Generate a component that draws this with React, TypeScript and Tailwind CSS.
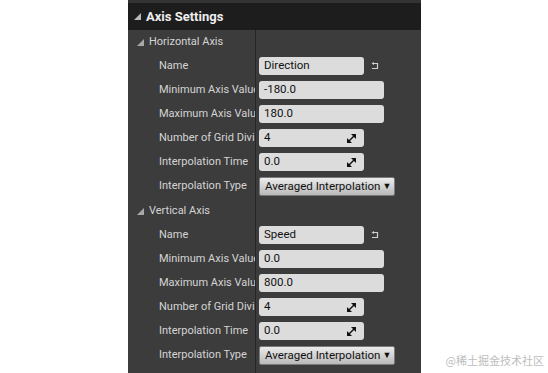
import React from "react";

type Field =
  | { label: string; kind: "name"; value: string }
  | { label: string; kind: "text"; value: string }
  | { label: string; kind: "spin"; value: string }
  | { label: string; kind: "select"; value: string };

const sections: { title: string; fields: Field[] }[] = [
  {
    title: "Horizontal Axis",
    fields: [
      { label: "Name", kind: "name", value: "Direction" },
      { label: "Minimum Axis Value", kind: "text", value: "-180.0" },
      { label: "Maximum Axis Value", kind: "text", value: "180.0" },
      { label: "Number of Grid Divisions", kind: "spin", value: "4" },
      { label: "Interpolation Time", kind: "spin", value: "0.0" },
      { label: "Interpolation Type", kind: "select", value: "Averaged Interpolation" },
    ],
  },
  {
    title: "Vertical Axis",
    fields: [
      { label: "Name", kind: "name", value: "Speed" },
      { label: "Minimum Axis Value", kind: "text", value: "0.0" },
      { label: "Maximum Axis Value", kind: "text", value: "800.0" },
      { label: "Number of Grid Divisions", kind: "spin", value: "4" },
      { label: "Interpolation Time", kind: "spin", value: "0.0" },
      { label: "Interpolation Type", kind: "select", value: "Averaged Interpolation" },
    ],
  },
];

const Arrow = ({ className }: { className: string }) => (
  <svg width="7" height="7" viewBox="0 0 7 7" className={className}>
    <polygon points="7,0 7,7 0,7" fill="currentColor" />
  </svg>
);

// little "reset to default" hook arrow next to Name
const ResetIcon = () => (
  <svg width="8" height="8" viewBox="0 0 8 8" className="text-[#d0d0d0]">
    <path d="M2.5 1.5 H6.5 V6.5 H1" fill="none" stroke="currentColor" strokeWidth="1.2" />
    <polygon points="0.5,1.5 3,0 3,3" fill="currentColor" />
  </svg>
);

const SpinIcon = () => (
  <svg width="9" height="9" viewBox="0 0 9 9" className="text-[#111]">
    <polygon points="0,9 0,4 5,9" fill="currentColor" />
    <polygon points="9,0 9,5 4,0" fill="currentColor" />
    <line x1="1" y1="8" x2="8" y2="1" stroke="currentColor" strokeWidth="1.4" />
  </svg>
);

const Value = ({ field }: { field: Field }) => {
  if (field.kind === "select") {
    return (
      <div className="flex h-[19px] w-[136px] items-center whitespace-nowrap rounded-[2px] border border-[#7a7a7a] bg-gradient-to-b from-[#ececec] to-[#b9b9b9] pl-[5px] text-[11.5px] text-[#111]">
        <span>{field.value}</span>
        <span className="ml-[2px] text-[9px] leading-none">▼</span>
      </div>
    );
  }
  const wide = field.kind === "text";
  return (
    <div className="flex items-center gap-[7px]">
      <div
        className={`flex h-[18px] items-center justify-between rounded-[3px] bg-[#dcdcdc] pl-[5px] pr-[8px] text-[11.5px] text-[#111] ${
          wide ? "w-[125px]" : "w-[105px]"
        }`}
      >
        <span>{field.value}</span>
        {field.kind === "spin" && <SpinIcon />}
      </div>
      {field.kind === "name" && <ResetIcon />}
    </div>
  );
};

const App = () => {
  return (
    <div
      className="relative h-[373px] w-[548px] overflow-hidden bg-white pl-[128px]"
      style={{ fontFamily: "Roboto, 'Noto Sans', sans-serif" }}
    >
      <div className="flex h-full w-[293px] flex-col bg-[#3c3c3c]">
        <div className="h-[3px] bg-[#333]" />
        <div className="flex h-[27px] items-center bg-[#1d1d1d] pl-[6px]">
          <Arrow className="mr-[5px] text-[#b8b8b8]" />
          <span className="text-[13px] font-bold text-[#eeeeee]">Axis Settings</span>
        </div>

        <div className="flex flex-1 flex-col">
          {sections.map((section) => (
            <div key={section.title} className="flex flex-col">
              <div className="flex h-[24px]">
                <div className="flex w-[128px] items-center border-r border-[#262626] pl-[9px] text-[11px] text-[#d4d4d4]">
                  <Arrow className="mr-[5px] text-[#a8a8a8]" />
                  {section.title}
                </div>
              </div>
              {section.fields.map((field) => (
                <div
                  key={field.label}
                  className={`flex ${field.kind === "select" ? "h-[25px]" : "h-[24px]"}`}
                >
                  <div className="flex w-[128px] items-center overflow-hidden whitespace-nowrap border-r border-[#262626] pl-[31px] text-[11px] text-[#d4d4d4]">
                    {field.label}
                  </div>
                  <div className="flex items-center pl-[3px]">
                    <Value field={field} />
                  </div>
                </div>
              ))}
            </div>
          ))}
          <div className="flex-1">
            <div className="h-full w-[128px] border-r border-[#262626]" />
          </div>
        </div>
      </div>

      <span
        className="absolute bottom-[5px] right-[4px] text-[11px] text-[#bdbdbd]"
        style={{ fontFamily: "'Noto Sans CJK SC', sans-serif" }}
      >
        @稀土掘金技术社区
      </span>
    </div>
  );
};

export default App;
